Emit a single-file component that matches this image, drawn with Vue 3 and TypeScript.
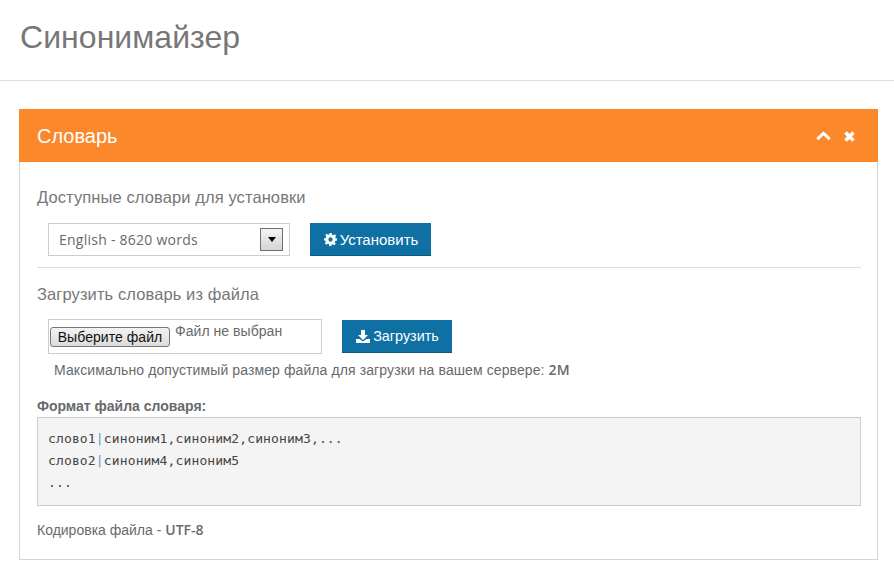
<script setup lang="ts">
const lines: [string, string][] = [
  ['слово1', 'синоним1,синоним2,синоним3,...'],
  ['слово2', 'синоним4,синоним5'],
]
</script>

<template>
  <div class="page">
    <header class="top"><h1>Синонимайзер</h1></header>
    <section class="panel">
      <div class="panel-head">
        <h2>Словарь</h2>
        <div class="tools">
          <svg width="15" height="10" viewBox="0 0 15 10"><path d="M1.300 8.200 7.500 2.300l6.200 5.900" fill="none" stroke="#fff" stroke-width="3"/></svg>
          <svg width="11" height="11" viewBox="0 0 11 11"><path d="M1.500 1.500l8 8M9.500 1.500l-8 8" fill="none" stroke="#fff" stroke-width="3.600"/></svg>
        </div>
      </div>
      <div class="panel-body">
        <h3 class="first">Доступные словари для установки</h3>
        <div class="row install">
          <div class="select">
            <span class="os">English - 8620 words</span>
            <span class="arrow"><i></i></span>
          </div>
          <button class="btn b1">
            <svg width="13" height="13" viewBox="0 0 24 24"><path fill="#fff" fill-rule="evenodd" d="M10 0h4l.7 3.200 2.200.9 2.800-1.800 2.800 2.800-1.800 2.800.9 2.200L24 10v4l-3.200.7-.9 2.200 1.800 2.800-2.800 2.800-2.800-1.800-2.200.9L14 24h-4l-.7-3.200-2.200-.9-2.800 1.800-2.800-2.800 1.800-2.800-.9-2.200L0 14v-4l3.200-.7.9-2.200-1.800-2.800 2.800-2.800 2.800 1.800 2.200-.9zM12 8a4 4 0 1 0 0 8 4 4 0 0 0 0-8z"/></svg>
            Установить
          </button>
        </div>
        <hr />
        <h3>Загрузить словарь из файла</h3>
        <div class="row upload">
          <div class="file">
            <span class="pick">Выберите файл</span>
            <span class="none">Файл не выбран</span>
          </div>
          <button class="btn b2">
            <svg width="14" height="13" viewBox="0 0 14 13"><path fill="#fff" d="M5 0h4v5h3L7 10 2 5h3zM0 9h3.500L7 11.500 10.500 9H14v4H0z"/></svg>
            Загрузить
          </button>
        </div>
        <p class="limit">Максимально допустимый размер файла для загрузки на вашем сервере: <b class="os">2M</b></p>
        <p class="fmt">Формат файла словаря:</p>
        <pre class="code"><template v-for="l in lines" :key="l[0]">{{ l[0] }}<span class="sep">|</span>{{ l[1] }}
</template>...</pre>
        <p class="enc">Кодировка файла - <b class="os">UTF-8</b></p>
      </div>
    </section>
  </div>
</template>

<style scoped>
.page { width: 894px; height: 571px; overflow: hidden; background: #fff; font-family: "Liberation Sans", Arial, sans-serif; color: #676a6c; }
.top { height: 80px; border-bottom: 1px solid #ddd; padding-left: 20px; }
h1 { margin: 0; font-size: 32px; line-height: 74px; font-weight: 400; color: #777; letter-spacing: 0.05px; }
.panel { margin: 28px 16px 0 19px; border: 1px solid #d4d4d4; border-top: 0; height: 451px; box-sizing: border-box; }
.panel-head { height: 53px; margin: 0 -1px; background: #fb882b; display: flex; align-items: center; justify-content: space-between; padding: 1px 23px 0 18px; box-sizing: border-box; }
h2 { margin: 0; font-size: 20px; font-weight: 400; color: #fff; }
.tools { display: flex; align-items: center; gap: 13px; }
.panel-body { padding: 0 16px 0 17px; }
h3 { margin: 0; font-size: 16.5px; font-weight: 400; line-height: 18px; color: #777; letter-spacing: 0.1px; }
h3.first { padding-top: 26px; }
.row { display: flex; align-items: flex-start; }
.install { margin: 17px 0 0 11px; gap: 20px; }
.select { width: 242px; height: 33px; box-sizing: border-box; border: 1px solid #ccc; display: flex; align-items: center; justify-content: space-between; padding: 0 6px 0 10px; font-size: 14px; color: #676a6c; }
.select .os { letter-spacing: 0.25px; }
.os { font-family: "Open Sans", sans-serif; }
.arrow { width: 23px; height: 23px; box-sizing: border-box; border: 1px solid #707070; background: linear-gradient(#f4f4f4, #d4d4d4); display: flex; align-items: center; justify-content: center; }
.arrow i { width: 0; height: 0; border: 4.500px solid transparent; border-top: 5px solid #000; border-bottom: 0; }
.btn { height: 33px; border: 0; border-bottom: 1px solid #0b5a85; padding: 0 0 0 1px; background: #0f70a3; color: #fff; font: 15px "Liberation Sans", Arial, sans-serif; display: flex; align-items: center; justify-content: center; gap: 3px; }
.b1 { width: 121px; }
.b2 { width: 110px; margin-top: 1px; font-size: 14.4px; }
hr { margin: 11px 0 0; border: 0; border-top: 1px solid #ddd; }
hr + h3 { margin-top: 17px; }
.upload { margin: 16px 0 0 11px; gap: 20px; }
.file { width: 274px; height: 35px; box-sizing: border-box; border: 1px solid #ccc; position: relative; font-size: 14px; }
.pick { position: absolute; left: 1px; top: 7px; width: 120px; height: 20px; box-sizing: border-box; border: 1px solid #767676; border-radius: 3px; background: linear-gradient(#f2f2f2, #dcdcdc); color: #111; font-size: 14px; line-height: 18px; text-align: center; letter-spacing: 0.05px; }
.none { position: absolute; left: 126px; top: 3px; color: #676a6c; letter-spacing: 0.05px; }
.limit { margin: 7px 0 0 17px; font-size: 14px; line-height: 17px; letter-spacing: 0.1px; }
.limit b { font-weight: 600; }
.fmt { margin: 19px 0 0; font-size: 14px; font-weight: 700; line-height: 17px; }
.code { margin: 2px 0 0; height: 89px; box-sizing: border-box; border: 1px solid #ccc; background: #f4f4f4; padding: 10px; font: 13px/22px "DejaVu Sans Mono", monospace; letter-spacing: 0.14px; color: #444; }
.sep { color: #5b9bd5; }
.enc { margin: 15px 0 0; font-size: 14px; line-height: 17px; }
.enc b { font-weight: 600; }
</style>
